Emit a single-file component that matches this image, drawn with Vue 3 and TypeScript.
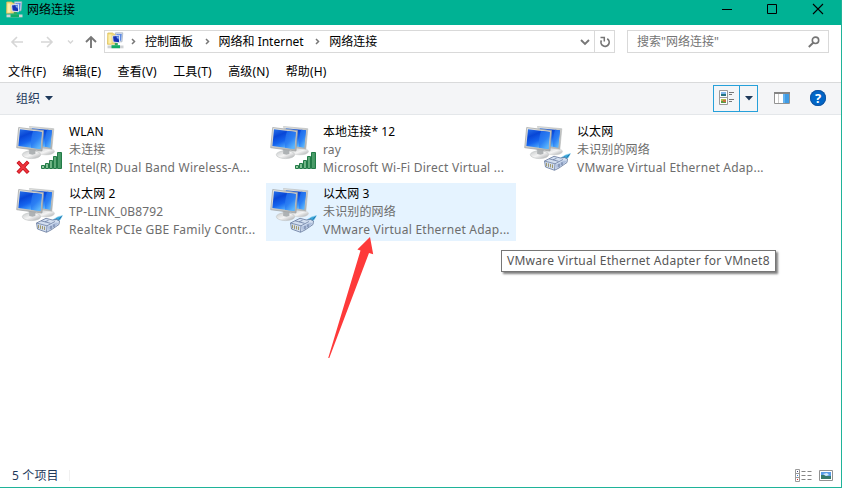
<script setup lang="ts">
type Overlay = 'signal' | 'plug'

interface Connection {
  name: string
  status: string
  device: string
  overlay: Overlay
  disconnected?: boolean
  selected?: boolean
}

interface Menu {
  label: string
  key: string
}

const crumbs: string[] = ['控制面板', '网络和 Internet', '网络连接']

const menus: Menu[] = [
  { label: '文件', key: 'F' },
  { label: '编辑', key: 'E' },
  { label: '查看', key: 'V' },
  { label: '工具', key: 'T' },
  { label: '高级', key: 'N' },
  { label: '帮助', key: 'H' },
]

const connections: Connection[] = [
  { name: 'WLAN', status: '未连接', device: 'Intel(R) Dual Band Wireless-A...', overlay: 'signal', disconnected: true },
  { name: '本地连接* 12', status: 'ray', device: 'Microsoft Wi-Fi Direct Virtual ...', overlay: 'signal' },
  { name: '以太网', status: '未识别的网络', device: 'VMware Virtual Ethernet Adap...', overlay: 'plug' },
  { name: '以太网 2', status: 'TP-LINK_0B8792', device: 'Realtek PCIe GBE Family Contr...', overlay: 'plug' },
  { name: '以太网 3', status: '未识别的网络', device: 'VMware Virtual Ethernet Adap...', overlay: 'plug', selected: true },
]
</script>

<template>
  <div class="window">
    <svg class="defs" width="0" height="0" aria-hidden="true">
      <defs>
        <linearGradient id="screen" x1="0" y1="0" x2="0.5" y2="1">
          <stop offset="0" stop-color="#2a74ea" />
          <stop offset="0.35" stop-color="#0846d6" />
          <stop offset="0.65" stop-color="#1564ee" />
          <stop offset="1" stop-color="#56b4ff" />
        </linearGradient>
        <linearGradient id="glare" x1="0" y1="0" x2="0.6" y2="1">
          <stop offset="0" stop-color="#1a62e6" />
          <stop offset="0.6" stop-color="#2c80f4" />
          <stop offset="1" stop-color="#5ab4fc" />
        </linearGradient>
        <linearGradient id="frame" x1="0" y1="0" x2="1" y2="1">
          <stop offset="0" stop-color="#e9e9e6" />
          <stop offset="1" stop-color="#a9abab" />
        </linearGradient>
        <linearGradient id="stand" x1="0" y1="0" x2="1" y2="1">
          <stop offset="0" stop-color="#c5c8c9" />
          <stop offset="0.5" stop-color="#f4f4f4" />
          <stop offset="1" stop-color="#a4a6a8" />
        </linearGradient>
        <linearGradient id="bars" x1="0" y1="0" x2="1" y2="0">
          <stop offset="0" stop-color="#9bd0a8" />
          <stop offset="1" stop-color="#3f9560" />
        </linearGradient>
        <symbol id="folder-net" viewBox="0 0 17 17">
          <path d="M.8 1h4.700l1.500 1.200h2v9.800l-8.500.3z" fill="#f3da78" stroke="#dcc05c" stroke-width=".8" />
          <path d="M1.500 2.500h3v9h-3z" fill="#fcefad" />
          <path d="M8.500.8h7.300l-.8 9h-6z" fill="#d3dcec" stroke="#a4afbf" stroke-width=".7" />
          <path d="M9.500 2h5.200l-.6 6.800H9.500z" fill="#5d8ae2" />
          <path d="M5.500 4l7-.8v7.600l-6.300-.8z" fill="#1632b4" stroke="#dbe3f2" />
          <path d="M9 4.600l3-.4-.5 3.600z" fill="#83aef2" />
          <path d="M7.800 11h3v2.500h-3z" fill="#38a860" />
          <path d="M.5 13.500h16v2.800H.5z" fill="#cfd2d4" />
          <path d="M4.500 13.200h8.500v3H4.500z" fill="#12ac66" />
        </symbol>
      </defs>
    </svg>

    <header class="titlebar">
      <svg class="app-icon" width="17" height="17"><use href="#folder-net" /></svg>
      <span class="title">网络连接</span>
      <div class="controls">
        <svg width="46" height="25"><path d="M16 9.5h10" stroke="#000" /></svg>
        <svg width="46" height="25"><path d="M15.5 4.5h9v9h-9z" fill="none" stroke="#000" /></svg>
        <svg width="46" height="25"><path d="M15 4l10 10M25 4l-10 10" stroke="#000" stroke-width="1.1" /></svg>
      </div>
    </header>

    <nav class="navbar">
      <svg class="arrows" width="105" height="23" fill="none">
        <g stroke="#d6d6d6" stroke-width="1.6">
          <path d="M23 12H12M17 7l-5 5 5 5" />
          <path d="M41 12h11M47 7l5 5-5 5" />
          <path d="M68 10.5l2.5 2.5 2.500-2.500" stroke-width="1.4" />
        </g>
        <path d="M91 18V7.5M86 12l5-5 5 5" stroke="#777" stroke-width="1.9" />
      </svg>
      <div class="address">
        <svg class="address-icon" width="17" height="17"><use href="#folder-net" /></svg>
        <template v-for="crumb in crumbs" :key="crumb">
          <svg class="chevron" width="5" height="9" fill="none">
            <path d="M1 2l2.500 2.500L1 7" stroke="#777" stroke-width="1.5" />
          </svg>
          <span class="crumb">{{ crumb }}</span>
        </template>
        <svg class="dropdown" width="10" height="8" fill="none">
          <path d="M1 2l4 4 4-4" stroke="#777" stroke-width="1.9" />
        </svg>
        <div class="refresh">
          <svg width="12" height="12" fill="none">
            <path d="M8.200 2.700A4.100 4.100 0 1 1 2.400 4.400" stroke="#757575" stroke-width="1.700" />
            <path d="M1.500 1.600h3.800v4" stroke="#757575" stroke-width="1.500" />
          </svg>
        </div>
      </div>
      <div class="search">
        <span>搜索"网络连接"</span>
        <svg width="12" height="12" fill="none">
          <circle cx="7.5" cy="4.3" r="3.2" stroke="#757575" stroke-width="1.6" />
          <path d="M5.2 6.7L.8 11" stroke="#757575" stroke-width="1.9" />
        </svg>
      </div>
    </nav>

    <div class="menubar">
      <span v-for="menu in menus" :key="menu.key" class="menu">{{ menu.label }}({{ menu.key }})</span>
    </div>

    <div class="toolbar">
      <span class="organize">组织</span>
      <svg class="caret" width="8" height="5"><path d="M0 0h8L4 4.5z" fill="#1e395b" /></svg>
      <div class="view-switch">
        <div class="view-mode">
          <svg width="16" height="16">
            <path d="M.5.5h8v14h-8zM.5 7.5h8" fill="#fff" stroke="#9a9a9a" />
            <path d="M2 2h5v2H2z" fill="#83b8ed" /><path d="M2 4h5v2H2z" fill="#287480" />
            <path d="M2 9h5v2H2z" fill="#b4bc48" /><path d="M2 11h5v2H2z" fill="#5b9a42" /><path d="M4 10h3v2H4z" fill="#c87040" />
            <path d="M10 2.500h5M10 4.500h3M10 9.500h5M10 11.500h3" stroke="#777" />
          </svg>
        </div>
        <div class="view-menu">
          <svg width="8" height="5"><path d="M0 0h8L4 4.500z" fill="#1e395b" /></svg>
        </div>
      </div>
      <svg class="pane" width="16" height="12">
        <path d="M.5.5h15v11H.5z" fill="#fff" stroke="#929292" />
        <path d="M0 0h16v2H0z" fill="#858585" />
        <path d="M4.500 2v9" stroke="#ccc" />
        <path d="M9 2h6v9H9z" fill="#3f9be4" />
        <path d="M9 2h2v9H9z" fill="#64b2ee" />
      </svg>
      <div class="help">?</div>
    </div>

    <main class="content">
      <div v-for="item in connections" :key="item.name" class="item" :class="{ selected: item.selected }">
        <svg class="net-icon" width="50" height="54">
          <ellipse cx="32" cy="29.500" rx="8.500" ry="3.400" fill="url(#stand)" stroke="#d0d2d3" stroke-width=".5" />
          <path d="M15.500 4.500L39.800 6.700 37.800 27.300 22 25z" fill="url(#frame)" stroke="#b6b8b8" stroke-width=".6" />
          <path d="M17.500 6.300L37.900 8.200 36.200 25.500 24 24z" fill="url(#screen)" />
          <path d="M33 7.700L37.900 8.200 36.200 25.500 31 24.800c-.5-6 .5-12 2-17.100z" fill="url(#glare)" />
          <path d="M14.500 26h7l1.500 6h-8z" fill="#c1c5c8" />
          <ellipse cx="17.500" cy="32.700" rx="9.200" ry="3.900" fill="url(#stand)" stroke="#c0c2c3" stroke-width=".6" />
          <path d="M15.500 27l5.500 1 .5 3.500c-1 1.500-5 1.500-6.500 0z" fill="#aeb2b4" />
          <path d="M4.700 5.500L29.500 8.600 28 29 2.700 25.700z" fill="url(#frame)" stroke="#9fa2a3" stroke-width=".7" />
          <path d="M6 7.300L27.700 10 26.500 27 4.400 24.100z" fill="url(#screen)" />
          <path d="M19 8.900L27.700 10 26.500 27 17 25.700c-.5-6 .5-12 2-16.800z" fill="url(#glare)" />
          <g v-if="item.overlay === 'signal'" fill="url(#bars)" stroke="#227b47" stroke-width="1">
            <path d="M27.500 43.500h3v3h-3zM31.500 41.500h3v5h-3zM35.500 38.500h3v8h-3zM39.500 34.500h3v12h-3zM43.500 30.500h4v16h-4z" />
          </g>
          <g v-else stroke-linejoin="round">
            <path d="M38.500 36l5-3 5-1.500-2.500 4.500-4 2.500z" fill="#38a5d8" stroke="#8fd0ee" stroke-width=".6" />
            <path d="M40 36.500l3-1.500M45 35.500l2.500-3" stroke="#1b6ea8" stroke-width="1" />
            <path d="M22.500 39L32 34.300l6.500 1.700 4-.5 3 1.500-.5 3.500-8 5.500-4.500 2.300-9-3.300z" fill="#d3dff0" stroke="#64779a" stroke-width=".8" />
            <path d="M22.500 39L33 41.800l8-4.300M33 41.800l-.5 6.200M27 36.800l9.500 2.500M31 37.800l3.500-1.500" fill="none" stroke="#6d80a4" stroke-width=".8" />
            <path d="M34 42.800l8-4.300 2.500.5-1.500 2.300-8.500 5z" fill="#aebfdd" />
            <path d="M37 42v3.300M40 40.300v3" stroke="#5d7094" stroke-width=".9" />
            <path d="M24.500 40.800v3.500M26.500 41.400v3.500M28.500 42v3.400M30.500 42.500v3.500" stroke="#9a9162" stroke-width=".9" />
          </g>
          <g v-if="item.disconnected" fill="none" stroke-linecap="square">
            <path d="M5 41l8 8.500M13 41l-8 8.500" stroke="#c4101c" stroke-width="3.600" />
            <path d="M5 41l8 8.500M13 41l-8 8.500" stroke="#ee343c" stroke-width="2" />
          </g>
        </svg>
        <div class="lines">
          <div class="name">{{ item.name }}</div>
          <div class="detail">{{ item.status }}</div>
          <div class="detail device">{{ item.device }}</div>
        </div>
      </div>
    </main>

    <footer class="statusbar">
      <span class="count">5 个项目</span>
      <i class="divider"></i>
      <svg class="mode-details" width="17" height="13">
        <path d="M.5.5h4v12h-4zM.5 4.500h4M.5 8.500h4" fill="#fff" stroke="#9a9a9a" />
        <path d="M2 2h1v1H2z" fill="#447" /><path d="M2 6h1v1H2z" fill="#2e7de0" /><path d="M2 10h1v1H2z" fill="#d22" />
        <path d="M6.500 2.500h4M12.500 2.500h4M6.500 6.500h4M12.500 6.500h4M6.500 10.500h4M12.500 10.500h4" stroke="#858585" />
      </svg>
      <svg class="mode-large" width="14" height="11">
        <path d="M.5.5h13v10H.5z" fill="#fff" stroke="#929292" />
        <path d="M2 2h10v7H2z" fill="#5b9de8" />
        <path d="M2 5h3l2 1h5v3H2z" fill="#36796c" />
        <path d="M4 4l4-1 2 2-3 1z" fill="#d6eafa" />
      </svg>
    </footer>

    <svg class="pointer" width="48" height="122">
      <path d="M42 0L45.200 17.200 41 16 1.300 121 .2 121 32.500 13.500 29.400 12.600z" fill="#fe3a3a" />
    </svg>
    <div class="tooltip">VMware Virtual Ethernet Adapter for VMnet8</div>
  </div>
</template>

<style>
body {
  margin: 0;
  overflow: hidden;
}
</style>

<style scoped>
.window {
  position: relative;
  box-sizing: border-box;
  display: flex;
  flex-direction: column;
  width: 842px;
  height: 488px;
  border-right: 1px solid #1fb399;
  border-bottom: 1px solid #1fb399;
  background: #fff;
  color: #000;
  font: 12px/18px "Noto Sans", "Noto Sans CJK SC", sans-serif;
  white-space: nowrap;
}
svg {
  display: block;
  flex: none;
}
.defs {
  position: absolute;
}
.titlebar {
  display: flex;
  height: 25px;
  flex: none;
  background: #00b294;
}
.app-icon {
  margin: 1px 4px 0 6px;
}
.title {
  line-height: 19px;
}
.controls {
  display: flex;
  margin-left: auto;
  margin-right: -3px;
}
.navbar {
  display: flex;
  height: 32px;
  flex: none;
  padding-top: 5px;
  box-sizing: border-box;
}
.arrows {
  margin-right: -1px;
}
.address,
.search {
  box-sizing: border-box;
  height: 23px;
  border: 1px solid #d9d9d9;
  display: flex;
  align-items: center;
}
.address {
  width: 511px;
}
.address-icon {
  margin: -2px 7px 0 2px;
}
.chevron {
  margin-right: 9px;
}
.crumb {
  margin-right: 11.5px;
}
.dropdown {
  margin-left: auto;
  margin-right: 4px;
}
.refresh {
  display: flex;
  align-items: center;
  justify-content: center;
  width: 19px;
  height: 21px;
  border-left: 1px solid #d9d9d9;
}
.search {
  width: 202px;
  margin-left: 12px;
  padding: 0 8px 0 9px;
  justify-content: space-between;
  color: #757575;
}
.menubar {
  display: flex;
  height: 25px;
  flex: none;
  padding-left: 8px;
  gap: 16.4px;
  letter-spacing: 0.15px;
  line-height: 29px;
}
.toolbar {
  display: flex;
  align-items: center;
  box-sizing: border-box;
  height: 33px;
  flex: none;
  padding: 0 15px 0 16px;
  border-top: 1px solid #d9dadb;
  border-bottom: 1px solid #e4e7ea;
  background: #f4f5f7;
  color: #1e395b;
}
.caret {
  margin-left: 5px;
}
.view-switch {
  display: flex;
  box-sizing: border-box;
  width: 45px;
  height: 27px;
  margin-left: auto;
  border: 1px solid #26a0da;
}
.view-mode {
  box-sizing: border-box;
  width: 26px;
  padding: 4px 0 0 5px;
  border-right: 1px solid #26a0da;
}
.view-menu {
  display: flex;
  align-items: center;
  padding-left: 5px;
}
.pane {
  margin-left: 16px;
  margin-top: -1px;
}
.help {
  width: 16px;
  height: 16px;
  margin-top: -1px;
  margin-left: 20px;
  border-radius: 50%;
  background: #0066c8;
  box-shadow: inset 0 0 0 1px #1254a0;
  color: #fff;
  font-size: 13px;
  font-weight: 700;
  line-height: 16px;
  text-align: center;
}
.content {
  display: grid;
  grid-template-columns: repeat(3, 250px);
  grid-auto-rows: 58px;
  gap: 4px;
  flex: 1;
  padding: 6px 0 0 12px;
}
.item {
  display: flex;
}
.selected {
  background: #e5f3ff;
}
.net-icon {
  margin: 1px 5px 0 2px;
}
.lines {
  padding-top: 2px;
}
.lines > div {
  height: 18px;
}
.name {
  letter-spacing: 0.1px;
}
.detail {
  color: #6d6d6d;
  letter-spacing: 0.15px;
}
.device {
  letter-spacing: 0.24px;
}
.statusbar {
  display: flex;
  align-items: center;
  height: 23px;
  flex: none;
  padding: 0 8px 0 12px;
  color: #1e395b;
}
.count {
  letter-spacing: 0.15px;
}
.divider {
  width: 1px;
  height: 11px;
  margin-left: 10px;
  background: #f0f0f0;
}
.mode-details {
  margin-left: auto;
  margin-right: 7px;
}
.pointer {
  position: absolute;
  left: 328px;
  top: 237px;
}
.tooltip {
  position: absolute;
  left: 501px;
  top: 250px;
  box-sizing: border-box;
  width: 275px;
  height: 22px;
  padding-left: 5px;
  border: 1px solid #767676;
  background: #fff;
  box-shadow: 2px 2px 2px rgba(0, 0, 0, 0.5);
  color: #575757;
  letter-spacing: 0.26px;
  line-height: 20px;
}
</style>
